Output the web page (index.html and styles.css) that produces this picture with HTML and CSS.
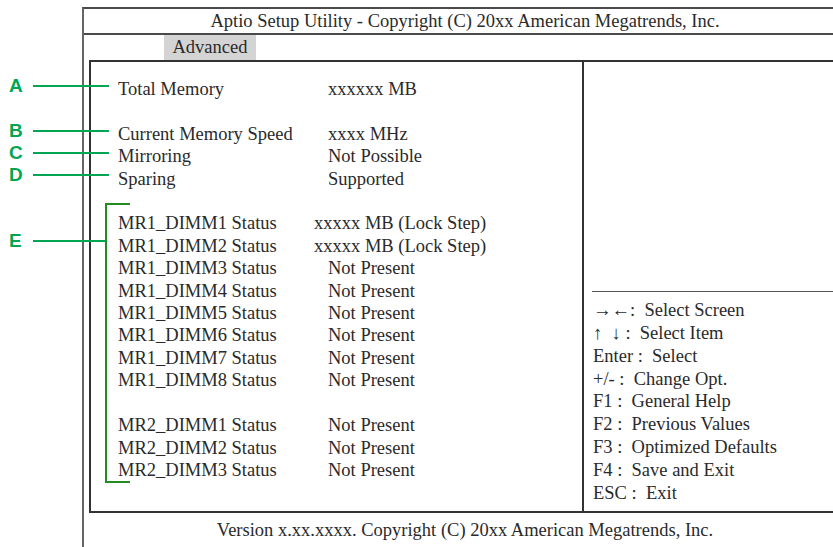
FILE: index.html
```html
<!DOCTYPE html>
<html lang="en">

<head>
  <meta charset="UTF-8">
  <title>Aptio Setup Utility - Memory Configuration</title>
  <link rel="stylesheet" href="styles.css">
</head>

<body>
  <div class="page">
    <div class="frame">
      <div class="title">Aptio Setup Utility - Copyright (C) 20xx American Megatrends, Inc.</div>
      <div class="tabs"><span class="tab">Advanced</span></div>

      <div class="main">
        <div class="items">
          <div class="row"><span class="name">Total Memory</span><span class="value">xxxxxx MB</span></div>
          <div class="row blank"></div>
          <div class="row"><span class="name">Current Memory Speed</span><span class="value">xxxx MHz</span></div>
          <div class="row"><span class="name">Mirroring</span><span class="value">Not Possible</span></div>
          <div class="row"><span class="name">Sparing</span><span class="value">Supported</span></div>
          <div class="row blank"></div>
          <div class="row"><span class="name">MR1_DIMM1 Status</span><span class="value wide">xxxxx MB (Lock Step)</span></div>
          <div class="row"><span class="name">MR1_DIMM2 Status</span><span class="value wide">xxxxx MB (Lock Step)</span></div>
          <div class="row"><span class="name">MR1_DIMM3 Status</span><span class="value">Not Present</span></div>
          <div class="row"><span class="name">MR1_DIMM4 Status</span><span class="value">Not Present</span></div>
          <div class="row"><span class="name">MR1_DIMM5 Status</span><span class="value">Not Present</span></div>
          <div class="row"><span class="name">MR1_DIMM6 Status</span><span class="value">Not Present</span></div>
          <div class="row"><span class="name">MR1_DIMM7 Status</span><span class="value">Not Present</span></div>
          <div class="row"><span class="name">MR1_DIMM8 Status</span><span class="value">Not Present</span></div>
          <div class="row blank"></div>
          <div class="row"><span class="name">MR2_DIMM1 Status</span><span class="value">Not Present</span></div>
          <div class="row"><span class="name">MR2_DIMM2 Status</span><span class="value">Not Present</span></div>
          <div class="row"><span class="name">MR2_DIMM3 Status</span><span class="value">Not Present</span></div>
        </div>

        <div class="help">
          <div class="keys">
            <div>&rarr;&larr;:&nbsp; Select Screen</div>
            <div>&uarr; &nbsp;&darr; :&nbsp; Select Item</div>
            <div>Enter :&nbsp; Select</div>
            <div>+/- :&nbsp; Change Opt.</div>
            <div>F1 :&nbsp; General Help</div>
            <div>F2 :&nbsp; Previous Values</div>
            <div>F3 :&nbsp; Optimized Defaults</div>
            <div>F4 :&nbsp; Save and Exit</div>
            <div>ESC :&nbsp; Exit</div>
          </div>
        </div>
      </div>

      <div class="footer">Version x.xx.xxxx. Copyright (C) 20xx American Megatrends, Inc.</div>
    </div>

    <!-- callouts -->
    <div class="callout callout-a"><span class="letter">A</span><span class="lead"></span></div>
    <div class="callout callout-b"><span class="letter">B</span><span class="lead"></span></div>
    <div class="callout callout-c"><span class="letter">C</span><span class="lead"></span></div>
    <div class="callout callout-d"><span class="letter">D</span><span class="lead"></span></div>
    <div class="callout callout-e"><span class="letter">E</span><span class="lead short"></span></div>
    <div class="bracket"></div>
  </div>
</body>

</html>
```

FILE: styles.css
```css
body {
  margin: 0;
  background: #fff;
  overflow: hidden;
  font-family: "Liberation Serif", Tinos, "Times New Roman", "DejaVu Serif", serif;
  font-size: 18.5px;
  color: #2a2a2a;
}

.page {
  position: relative;
  width: 833px;
  height: 547px;
  overflow: hidden;
}

.frame {
  margin: 7px 0 0 82px;
  width: 762px;
  height: 560px;
  border-top: 2px solid #4a4a4a;
  border-left: 2px solid #666;
}

.title {
  height: 24px;
  line-height: 24px;
  text-align: center;
  border-bottom: 2px solid #4a4a4a;
}

.tabs {
  height: 25px;
  padding-left: 80px;
}

.tab {
  display: inline-block;
  width: 92px;
  height: 25px;
  line-height: 25px;
  text-align: center;
  background: #d4d4d4;
}

.main {
  display: flex;
  box-sizing: border-box;
  height: 453px;
  margin-left: 5px;
  border: 2px solid #333;
}

.items {
  width: 491px;
  padding: 16px 0 0 27px;
  box-sizing: border-box;
}

.row {
  display: flex;
  height: 22.41px;
  line-height: 22.41px;
  white-space: nowrap;
}

.name {
  width: 210px;
}

.value.wide {
  margin-left: -14px;
}

.help {
  flex: 1;
  display: flex;
  flex-direction: column;
  justify-content: flex-end;
  border-left: 2px solid #333;
}

.keys {
  margin-left: 8px;
  padding: 7px 0 6px 1px;
  border-top: 1.5px solid #555;
  line-height: 22.9px;
  white-space: nowrap;
}

.footer {
  padding-top: 6px;
  line-height: 22px;
  text-align: center;
}

.callout {
  position: absolute;
  left: 9px;
  display: flex;
  align-items: center;
  height: 20px;
}

.letter {
  width: 24px;
  font-family: "Liberation Sans", Arial, sans-serif;
  font-size: 19px;
  font-weight: bold;
  color: #00a651;
}

.lead {
  width: 76px;
  height: 2px;
  background: #00a651;
}

.lead.short {
  width: 72px;
}

.callout-a { top: 76px; }
.callout-b { top: 121px; }
.callout-c { top: 143px; }
.callout-d { top: 165px; }
.callout-e { top: 231px; }

.bracket {
  position: absolute;
  left: 105px;
  top: 203px;
  width: 23px;
  height: 276px;
  border: 2px solid #228b22;
  border-right: none;
}
```
